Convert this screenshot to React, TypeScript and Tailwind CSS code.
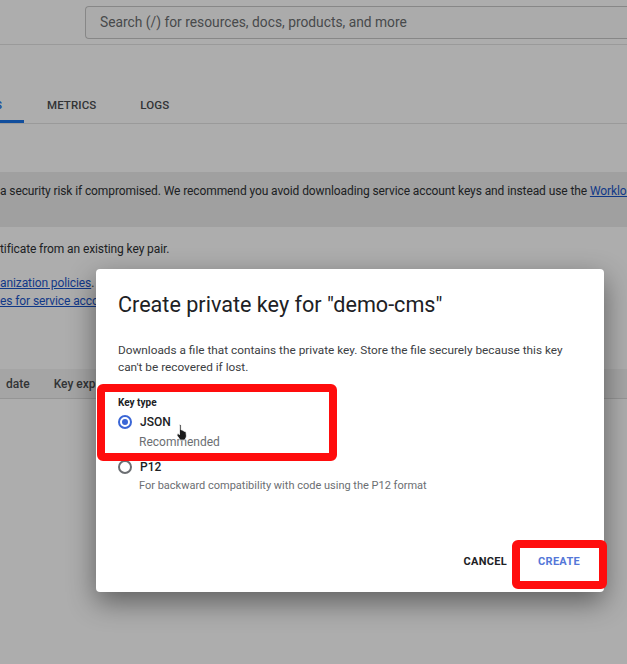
import React from 'react';

function Radio({ checked }: { checked: boolean }) {
  return (
    <span
      className={
        'flex h-[14px] w-[14px] shrink-0 items-center justify-center rounded-full border-2 ' +
        (checked ? 'border-[#3a66d6]' : 'border-[#6b6e72]')
      }
    >
      {checked && <span className="h-[6px] w-[6px] rounded-full bg-[#3a66d6]" />}
    </span>
  );
}

function HandCursor() {
  return (
    <svg width="13" height="18" viewBox="0 0 16 22" className="absolute left-[175px] top-[423px]">
      <path
        d="M6 1.5c.8 0 1.5.7 1.5 1.5v5.5l.2-.1c.8-.3 1.7.1 2 .9l.1.2c.8-.3 1.7.1 2 .9.8-.2 1.6.3 1.8 1.1l.4 3.5c.2 1.8-.4 3.5-1.6 4.8L12 21H6.5l-3.8-5.3c-.5-.7-.4-1.7.3-2.2.6-.5 1.5-.4 2 .2l.5.6V3c0-.8.7-1.5 1.5-1.5z"
        fill="#1b1b1b"
        stroke="#ffffff"
        strokeWidth="1"
      />
    </svg>
  );
}

export default function App() {
  return (
    <div className="relative h-[664px] w-[627px] overflow-hidden bg-white font-['Roboto','Liberation_Sans',sans-serif] text-[#3c4043]">
      {/* ==================== PAGE (behind the scrim) ==================== */}
      <header className="flex h-[45px] items-center border-b border-[#e3e3e3] pl-[85px]">
        <div className="flex h-[33px] flex-1 items-center rounded-l-[4px] border border-r-0 border-[#c8c8c8] bg-[#fdfdfd] pl-[14px] text-[13.8px] text-[#6a6d70]">
          Search (/) for resources, docs, products, and more
        </div>
      </header>

      <div className="h-[44px]" />

      <nav className="flex h-[35px] items-stretch border-b border-[#e3e3e3] text-[11.5px] font-medium tracking-[0.1px]">
        <div className="flex w-[24px] items-center border-b-[3px] border-[#1a73e8] pt-[3px] text-[#1a73e8]">
          <span className="-ml-[5px]">S</span>
        </div>
        <div className="ml-[23px] flex items-center text-[#4a4d50]">METRICS</div>
        <div className="ml-[44px] flex items-center text-[#4a4d50]">LOGS</div>
      </nav>

      <div className="h-[48px]" />

      <div className="flex h-[55px] items-start whitespace-nowrap bg-[#ececec] pt-[10px] text-[12px] tracking-[-0.1px] text-[#2e3134]">
        <span>
          a security risk if compromised. We recommend you avoid downloading service account keys and instead use
          the <span className="text-[#1a55c9] underline">Workload Identity Federation</span>
        </span>
      </div>

      <p className="mt-[14px] whitespace-nowrap text-[12px] leading-[17px] tracking-[-0.1px] text-[#2e3134]">
        tificate from an existing key pair.
      </p>
      <div className="mt-[16px] flex flex-col whitespace-nowrap text-[12px] leading-[18px] tracking-[-0.1px]">
        <span>
          <span className="text-[#1a55c9] underline">anization policies</span>.
        </span>
        <span className="text-[#1a55c9] underline">es for service accounts</span>
      </div>

      <div className="mt-[59px] flex h-[30px] items-center border-b border-[#dcdcdc] bg-[#f4f4f4] whitespace-nowrap text-[12px] font-medium text-[#4a4d50]">
        <span className="ml-[6px]">date</span>
        <span className="ml-[24px]">Key expiration date</span>
      </div>

      {/* ==================== SCRIM + DIALOG ==================== */}
      <div className="absolute inset-0 bg-black/[0.32]">
        <div className="ml-[96px] mt-[269px] flex h-[323px] w-[508px] flex-col rounded-[4px] bg-white px-[22px] shadow-[0_10px_28px_rgba(0,0,0,0.45)]">
          <h2 className="mt-[22px] text-[21.6px] leading-[28px] text-[#202124]">Create private key for "demo-cms"</h2>
          <p className="mt-[23px] text-[11.8px] leading-[17px] text-[#3c4043]">
            Downloads a file that contains the private key. Store the file securely because this key can't be
            recovered if lost.
          </p>

          <div className="mt-[20px] text-[10px] font-bold leading-[14px] text-[#202124]">Key type</div>

          <label className="mt-[2px] flex h-[20px] items-center gap-[8px]">
            <Radio checked />
            <span className="text-[12px] font-medium text-[#202124]">JSON</span>
          </label>
          <div className="ml-[21px] mt-[2px] text-[12px] leading-[16px] text-[#6b6e72]">Recommended</div>

          <label className="mt-[7px] flex h-[20px] items-center gap-[8px]">
            <Radio checked={false} />
            <span className="text-[12px] font-medium text-[#202124]">P12</span>
          </label>
          <div className="ml-[21px] mt-[1px] text-[11px] leading-[16px] text-[#6b6e72]">
            For backward compatibility with code using the P12 format
          </div>

          <div className="mt-auto mb-[22px] flex justify-end gap-[31px] pr-[2px] text-[11px] font-bold tracking-[0.3px]">
            <span className="text-[#202124]">CANCEL</span>
            <span className="text-[#5577d8]">CREATE</span>
          </div>
        </div>
      </div>

      {/* ==================== ANNOTATIONS ==================== */}
      <div className="absolute left-[97px] top-[384px] h-[77px] w-[240px] rounded-[6px] border-[8px] border-[#ff0d0d]" />
      <div className="absolute left-[512px] top-[540px] h-[49px] w-[95px] rounded-[6px] border-[8px] border-[#ff0d0d]" />
      <HandCursor />
    </div>
  );
}
